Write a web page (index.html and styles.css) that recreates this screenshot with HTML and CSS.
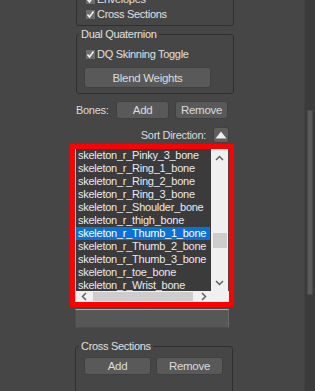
FILE: index.html
```html
<!DOCTYPE html>
<html lang="en">

<head>
  <meta charset="UTF-8">
  <meta name="viewport" content="width=device-width, initial-scale=1.0">
  <title>Skin Parameters</title>
  <link rel="stylesheet" href="styles.css">
</head>

<body>
  <div class="rollout">
    <div class="panel">
      <div class="column">
        <div class="group group-top">
          <label class="check-row"><span class="check"><svg width="9" height="9" viewBox="0 0 9 9"><polyline points="1.5,4.5 3.5,7 7.5,1.5" /></svg></span>Envelopes</label>
          <label class="check-row"><span class="check"><svg width="9" height="9" viewBox="0 0 9 9"><polyline points="1.5,4.5 3.5,7 7.5,1.5" /></svg></span>Cross Sections</label>
        </div>

        <fieldset class="group group-dq">
          <legend>Dual Quaternion</legend>
          <label class="check-row"><span class="check"><svg width="9" height="9" viewBox="0 0 9 9"><polyline points="1.5,4.5 3.5,7 7.5,1.5" /></svg></span>DQ Skinning Toggle</label>
          <button class="btn btn-blend">Blend Weights</button>
        </fieldset>

        <div class="bones-row">
          <span class="bones-label">Bones:</span>
          <button class="btn btn-small">Add</button>
          <button class="btn btn-small">Remove</button>
        </div>

        <div class="sort-row">
          <span>Sort Direction:</span>
          <button class="btn sort-btn"><svg width="12" height="8" viewBox="0 0 12 8"><polygon points="6,0.5 11.5,7.5 0.5,7.5" /></svg></button>
        </div>

        <div class="list-frame">
          <div class="list-main">
            <ul class="items">
              <li>skeleton_r_Pinky_3_bone</li>
              <li>skeleton_r_Ring_1_bone</li>
              <li>skeleton_r_Ring_2_bone</li>
              <li>skeleton_r_Ring_3_bone</li>
              <li>skeleton_r_Shoulder_bone</li>
              <li>skeleton_r_thigh_bone</li>
              <li class="selected">skeleton_r_Thumb_1_bone</li>
              <li>skeleton_r_Thumb_2_bone</li>
              <li>skeleton_r_Thumb_3_bone</li>
              <li>skeleton_r_toe_bone</li>
              <li>skeleton_r_Wrist_bone</li>
            </ul>
            <div class="vscroll">
              <div class="arrow"><svg width="9" height="6" viewBox="0 0 9 6"><polyline points="1,5 4.5,1.5 8,5" /></svg></div>
              <div class="vtrack"><div class="vthumb"></div></div>
              <div class="arrow"><svg width="9" height="6" viewBox="0 0 9 6"><polyline points="1,1 4.5,4.5 8,1" /></svg></div>
            </div>
          </div>
          <div class="hscroll-row">
            <div class="hscroll">
              <div class="harrow"><svg width="6" height="9" viewBox="0 0 6 9"><polyline points="5,1 1.5,4.5 5,8" /></svg></div>
              <div class="hthumb"></div>
              <div class="harrow"><svg width="6" height="9" viewBox="0 0 6 9"><polyline points="1,1 4.5,4.5 1,8" /></svg></div>
            </div>
            <div class="corner"></div>
          </div>
        </div>

        <input class="name-field" type="text">

        <fieldset class="group group-cs">
          <legend>Cross Sections</legend>
          <div class="btn-row">
            <button class="btn btn-wide">Add</button>
            <button class="btn btn-wide">Remove</button>
          </div>
        </fieldset>
      </div>
    </div>
    <div class="side-scroll">
      <div class="side-thumb"></div>
    </div>
  </div>
</body>

</html>
```

FILE: styles.css
```css
body {
  margin: 0;
  background: #464646;
  font-family: 'Liberation Sans', Arial, sans-serif;
  font-size: 11px;
  letter-spacing: -0.3px;
  color: #dcdcdc;
  overflow: hidden;
}

.rollout {
  display: flex;
  height: 391px;
}

.panel {
  flex: 1;
  display: flex;
  justify-content: center;
}

.column {
  width: 164px;
  display: flex;
  flex-direction: column;
}

/* group boxes */
.group {
  margin: 0 0 0 6px;
  width: 158px;
  box-sizing: border-box;
  border: 1px solid #2f2f2f;
  border-radius: 3px;
  min-width: 0;
}

.group legend {
  padding: 0 2px;
  line-height: 14px;
  color: #e0e0e0;
}

.group-top {
  margin-top: -13px;
  padding: 4px 8px 3px 9px;
}

.group-dq {
  margin-top: 1px;
  padding: 6px 8px 5px 9px;
}

.group-dq legend {
  margin-left: -7px;
}

.check-row {
  display: flex;
  align-items: center;
  gap: 2px;
  height: 15px;
  line-height: 15px;
  color: #e0e0e0;
}

.group-dq .check-row {
  height: 14px;
}

.check {
  width: 9px;
  height: 9px;
  background: #6c6c6c;
  display: flex;
}

.check polyline {
  fill: none;
  stroke: #f2f2f2;
  stroke-width: 1.6;
}

/* buttons */
.btn {
  font: inherit;
  letter-spacing: inherit;
  color: #dcdcdc;
  background: #595959;
  border: 1px solid #404040;
  border-radius: 3px;
  padding: 0;
  box-sizing: border-box;
}

.btn-blend {
  margin: 6px 0 0 -2px;
  width: 127px;
  height: 21px;
  font-size: 11.5px;
}

.bones-row {
  display: flex;
  align-items: center;
  height: 18px;
  margin-top: 7px;
  padding-left: 6px;
}

.bones-label {
  width: 41px;
}

.btn-small {
  width: 54px;
  height: 18px;
  margin-right: 6px;
  font-size: 11.5px;
}

.sort-row {
  display: flex;
  align-items: center;
  justify-content: flex-end;
  gap: 7px;
  height: 16px;
  margin-top: 8px;
  padding-right: 5px;
}

.sort-btn {
  width: 16px;
  height: 16px;
  display: flex;
  align-items: center;
  justify-content: center;
  background: #5e5e5e;
}

.sort-btn polygon {
  fill: #ededed;
}

/* bone list */
.list-frame {
  margin-top: 1px;
  border: 5px solid #ff0000;
  width: 164px;
  height: 163px;
  box-sizing: border-box;
  display: flex;
  flex-direction: column;
}

.list-main {
  display: flex;
  height: 142px;
}

.items {
  list-style: none;
  margin: 0;
  padding: 0;
  width: 135px;
  border-left: 1px solid #d8d8d8;
  background: #3b3b3b;
  overflow: hidden;
  font-size: 11px;
  letter-spacing: -0.25px;
}

.items li {
  height: 13px;
  line-height: 13px;
  padding-left: 2px;
  white-space: nowrap;
  color: #eaeaf2;
}

.items li.selected {
  background: #0a72d6;
  margin-right: 1px;
  color: #ffffff;
}

.vscroll {
  width: 17px;
  background: #f0f0f0;
  display: flex;
  flex-direction: column;
}

.arrow {
  height: 17px;
  display: flex;
  align-items: center;
  justify-content: center;
}

.arrow polyline,
.harrow polyline {
  fill: none;
  stroke: #606060;
  stroke-width: 1.5;
}

.vtrack {
  flex: 1;
}

.vthumb {
  margin: 67px 0 0 2px;
  width: 14px;
  height: 15px;
  background: #cdcdcd;
}

.hscroll-row {
  display: flex;
  height: 11px;
}

.hscroll {
  width: 136px;
  box-sizing: border-box;
  border-left: 1px solid #d8d8d8;
  background: #f0f0f0;
  display: flex;
  align-items: stretch;
}

.harrow {
  width: 15px;
  display: flex;
  align-items: center;
  justify-content: center;
}

.hthumb {
  margin: 1px 3px 1px 2px;
  width: 100px;
  background: #cdcdcd;
}

.corner {
  flex: 1;
  background: #f0f0f0;
}

.name-field {
  margin: 2px 0 0 5px;
  width: 154px;
  height: 21px;
  box-sizing: border-box;
  background: #575757;
  border: 1px solid #4c4c4c;
  border-top-color: #b0b0b0;
  border-right-color: #6a6a6a;
  outline: none;
}

.group-cs {
  margin: 11px 0 0 5px;
  padding: 4px 8px 20px 8px;
}

.group-cs legend {
  margin-left: -5px;
}

.btn-row {
  display: flex;
  gap: 5px;
}

.btn-wide {
  width: 67px;
  height: 18px;
  font-size: 11.5px;
}

/* outer rollout scrollbar */
.side-scroll {
  width: 11px;
  background: #3b3b3b;
  border-left: 1px solid #404040;
  box-sizing: border-box;
  padding: 110px 2px 0 2px;
}

.side-thumb {
  height: 183px;
  background: #5a5a5a;
  border: 1px solid #4a4a4a;
}
```
